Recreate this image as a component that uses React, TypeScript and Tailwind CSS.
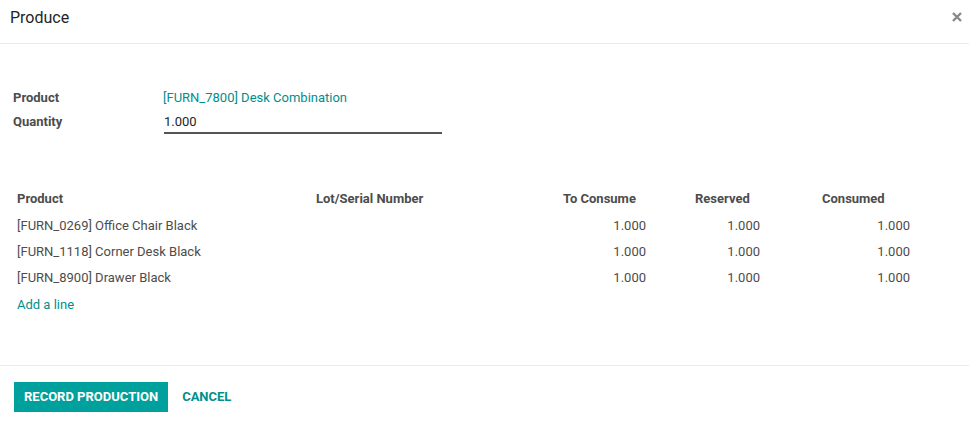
const lines = [
  { name: "[FURN_0269] Office Chair Black", toConsume: "1.000", reserved: "1.000", consumed: "1.000" },
  { name: "[FURN_1118] Corner Desk Black", toConsume: "1.000", reserved: "1.000", consumed: "1.000" },
  { name: "[FURN_8900] Drawer Black", toConsume: "1.000", reserved: "1.000", consumed: "1.000" },
];

const cols = "grid grid-cols-[299px_247px_91px_114px_150px_1fr]";

function App() {
  return (
    <div className="flex h-[424px] w-[969px] flex-col bg-white font-['Roboto',sans-serif] text-[13px] text-[#4c4c4c]">
      <div className="flex h-[44px] items-center justify-between border-b border-[#e9ecef] pl-[10px]">
        <h4 className="pb-[7px] text-[16px] text-[#212529]">Produce</h4>
        <button className="flex h-6 w-6 items-center justify-center pb-[9px] text-[#888]">
          <svg width="10" height="10" viewBox="0 0 10 10">
            <path d="M1 1L9 9M9 1L1 9" stroke="currentColor" strokeWidth="2.4" />
          </svg>
        </button>
      </div>

      <div className="flex-1 px-[13px]">
        <div className="mt-[44px] grid grid-cols-[150px_279px] gap-y-[5px]">
          <div className="font-bold leading-[19px]">Product</div>
          <div className="leading-[19px] text-[#008f8c]">[FURN_7800] Desk Combination</div>
          <div className="font-bold leading-[19px]">Quantity</div>
          <div className="ml-[1px] border-b-2 border-[#555] pb-[1px] leading-[19px] text-[#212529]">1.000</div>
        </div>

        <div className="mt-[52px]">
          <div className={`${cols} h-[27px] items-center pb-[2px] font-bold`}>
            <div className="pl-1">Product</div>
            <div className="pl-1">Lot/Serial Number</div>
            <div className="pl-1">To Consume</div>
            <div className="pl-[45px]">Reserved</div>
            <div className="pl-[58px]">Consumed</div>
            <div />
          </div>
          {lines.map((line) => (
            <div key={line.name} className={`${cols} h-[26px] items-center`}>
              <div className="pl-1">{line.name}</div>
              <div />
              <div className="pr-1 text-right">{line.toConsume}</div>
              <div className="pr-1 text-right">{line.reserved}</div>
              <div className="pr-1 text-right">{line.consumed}</div>
              <div />
            </div>
          ))}
          <div className="flex h-[28px] items-center pl-1 text-[#008f8c]">Add a line</div>
        </div>
      </div>

      <div className="flex h-[59px] items-start gap-[1px] border-t border-[#e9ecef] px-[14px] pt-[16px]">
        <button className="h-[30px] bg-[#00a09d] px-[10px] text-[13px] font-bold text-white">RECORD PRODUCTION</button>
        <button className="h-[30px] px-[13px] text-[13px] font-bold text-[#008f8c]">CANCEL</button>
      </div>
    </div>
  );
}

export default App;
